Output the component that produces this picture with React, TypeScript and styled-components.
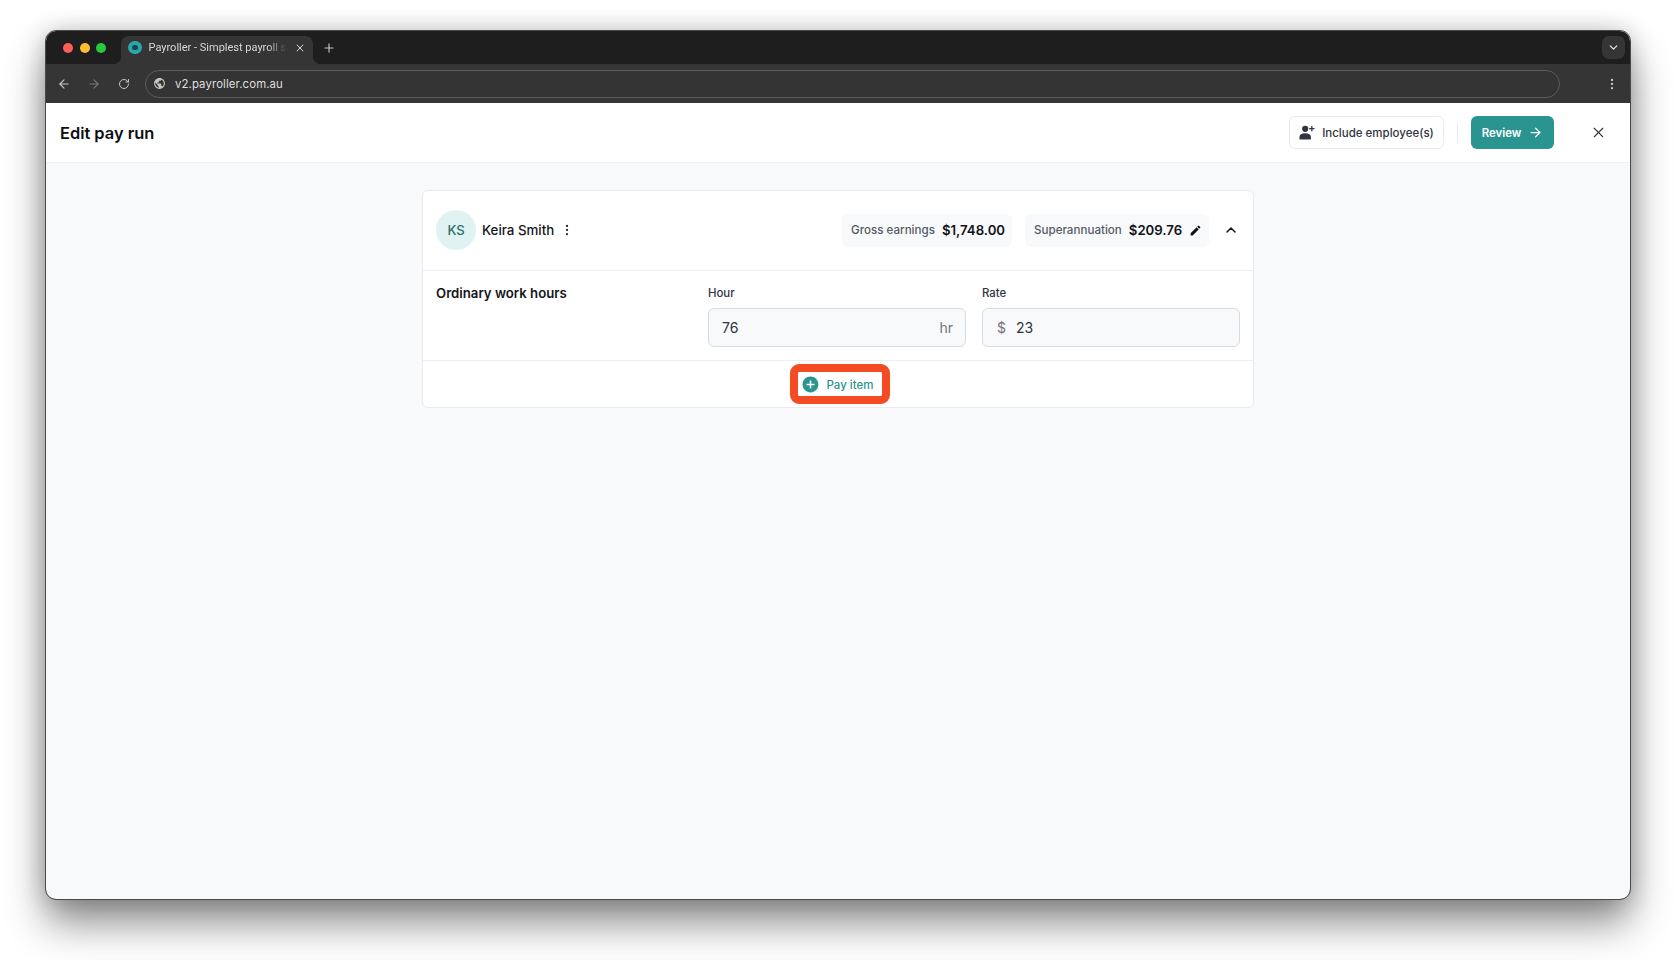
import React from "react";
import styled, { createGlobalStyle } from "styled-components";
import { ArrowLeft, ArrowRight, ChevronDown, ChevronUp, EllipsisVertical, Plus, RotateCw, X } from "lucide-react";
import { MdAddCircle, MdEdit, MdPublic } from "react-icons/md";

const teal = "#2a9490";

const GlobalStyle = createGlobalStyle`
  html, body {
    margin: 0;
    padding: 0;
    background: #fff;
  }
  * {
    box-sizing: border-box;
  }
  body {
    font-family: Inter, "Liberation Sans", sans-serif;
    color: #111318;
  }
`;

const Page = styled.div`
  width: 1676px;
  height: 960px;
  padding: 31px 46px 61px 46px;
  overflow: hidden;
`;

const BrowserWindow = styled.div`
  height: 100%;
  display: flex;
  flex-direction: column;
  border-radius: 10px;
  overflow: hidden;
  background: #f8f9fb;
  outline: 1px solid #4a4a4a;
  box-shadow: 0 24px 40px rgba(0, 0, 0, 0.45), 0 0 24px rgba(0, 0, 0, 0.22);
`;

const TitleBar = styled.div`
  height: 33px;
  flex: none;
  background: #1e1e1e;
  display: flex;
  align-items: flex-end;
  padding: 0 5px 0 17px;
`;

const Lights = styled.div`
  height: 28px;
  display: flex;
  align-items: center;
  gap: 6.5px;
  padding-bottom: 5px;
  margin-right: 15px;
`;

const Light = styled.span<{ $color: string }>`
  width: 10px;
  height: 10px;
  border-radius: 50%;
  background: ${(p) => p.$color};
`;

const Tab = styled.div`
  width: 192px;
  height: 28px;
  position: relative;
  background: #353535;
  border-radius: 8px 8px 0 0;
  display: flex;
  align-items: center;
  padding: 0 7px 5px 7px;
  color: #d8d8d8;
  font-family: Roboto, sans-serif;
  font-size: 11px;
  &::before,
  &::after {
    content: "";
    position: absolute;
    bottom: 0;
    width: 8px;
    height: 8px;
  }
  &::before {
    left: -8px;
    background: radial-gradient(circle at 0 0, transparent 8px, #353535 8.5px);
  }
  &::after {
    right: -8px;
    background: radial-gradient(circle at 100% 0, transparent 8px, #353535 8.5px);
  }
`;

const Favicon = styled.span`
  width: 13.5px;
  height: 13.5px;
  flex: none;
  border-radius: 50%;
  border: 4px solid #2aa6ac;
  background: #17464a;
  margin-right: 7px;
`;

const TabTitle = styled.span`
  flex: 1;
  min-width: 0;
  white-space: nowrap;
  -webkit-mask-image: linear-gradient(to right, #000 84%, transparent 98%);
  mask-image: linear-gradient(to right, #000 84%, transparent 98%);
`;

const TabClose = styled(X)`
  flex: none;
  margin-left: 4px;
  color: #d8d8d8;
`;

const NewTab = styled(Plus)`
  color: #c4c4c4;
  margin: 0 0 9px 9px;
`;

const TitleSpacer = styled.div`
  flex: 1;
`;

const TabSearch = styled.div`
  width: 23px;
  height: 23px;
  margin-bottom: 5px;
  border-radius: 7px;
  background: #353535;
  display: flex;
  align-items: center;
  justify-content: center;
  color: #e4e4e4;
`;

const Toolbar = styled.div`
  height: 39px;
  flex: none;
  background: #353535;
  display: flex;
  align-items: center;
  padding: 0 11px 0 3px;
`;

const NavButton = styled.div<{ $dim?: boolean }>`
  width: 30px;
  display: flex;
  justify-content: center;
  color: ${(p) => (p.$dim ? "#777" : "#c6c6c6")};
`;

const AddressBar = styled.div`
  width: 1415px;
  height: 28px;
  margin-left: 6px;
  border: 1px solid #5c5c5c;
  border-radius: 14px;
  display: flex;
  align-items: center;
  gap: 9.5px;
  padding-left: 6.5px;
  color: #dedede;
  font-size: 11.4px;
  letter-spacing: 0.1px;
  background: #343434;
`;

const Kebab = styled(EllipsisVertical)`
  margin-left: auto;
  color: #c6c6c6;
`;

const AppHeader = styled.header`
  height: 60px;
  flex: none;
  background: #fff;
  border-bottom: 1px solid #eef0f3;
  display: flex;
  align-items: center;
  padding: 0 23px 0 14px;
`;

const PageTitle = styled.h1`
  margin: 0;
  font-size: 16.4px;
  line-height: 20px;
  font-weight: 600;
  flex: 1;
  color: #0c0e12;
`;

const OutlineButton = styled.button`
  height: 33px;
  width: 155px;
  border: 1px solid #e8eaee;
  border-radius: 6px;
  background: #fff;
  display: flex;
  align-items: center;
  justify-content: center;
  gap: 7px;
  color: #30343e;
  font: 500 11.5px Inter, sans-serif;
`;

const HeaderDivider = styled.div`
  width: 1px;
  height: 20px;
  background: #e8eaee;
  margin: 0 13px;
`;

const PrimaryButton = styled.button`
  height: 33px;
  width: 83px;
  border: 0;
  border-radius: 6px;
  background: ${teal};
  color: #fff;
  display: flex;
  align-items: center;
  justify-content: center;
  gap: 7px;
  font: 600 11.4px Inter, sans-serif;
`;

const CloseButton = styled.div`
  margin-left: 36px;
  display: flex;
  color: #33363f;
`;

const Content = styled.main`
  flex: 1;
  padding: 27px 376px 0 376px;
`;

const Card = styled.section`
  background: #fff;
  border: 1px solid #e9ebef;
  border-radius: 6px;
`;

const CardHeader = styled.div`
  height: 80px;
  display: flex;
  align-items: center;
  padding: 0 14px 1px 13px;
  border-bottom: 1px solid #eceef1;
`;

const Avatar = styled.div`
  width: 40px;
  height: 40px;
  border-radius: 50%;
  background: #e0f3f2;
  color: #2f6f6c;
  font-size: 13px;
  font-weight: 500;
  display: flex;
  align-items: center;
  justify-content: center;
  margin-right: 6px;
`;

const Name = styled.span`
  font-size: 13.3px;
  font-weight: 500;
  color: #14161b;
`;

const NameMenu = styled(EllipsisVertical)`
  margin-left: 6px;
  color: #30343e;
`;

const StatGroup = styled.div`
  margin-left: auto;
  display: flex;
  gap: 13px;
  align-items: center;
`;

const Stat = styled.div<{ $width: number }>`
  width: ${(p) => p.$width}px;
  height: 33px;
  border-radius: 6px;
  background: #f8f9fb;
  display: flex;
  align-items: center;
  padding: 0 9px 0 9px;
  gap: 7px;
  white-space: nowrap;
`;

const StatLabel = styled.span`
  font-size: 11.6px;
  font-weight: 500;
  color: #555a66;
`;

const StatValue = styled.span`
  font-size: 13.2px;
  font-weight: 600;
  color: #111318;
`;

const EditIcon = styled(MdEdit)`
  flex: none;
  margin-left: auto;
  color: #111318;
`;

const Collapse = styled(ChevronUp)`
  margin-left: 14px;
  color: #111318;
`;

const WorkRow = styled.div`
  display: grid;
  grid-template-columns: 256px 258px 258px;
  column-gap: 16px;
  height: 90px;
  padding: 14px 13px 0;
  border-bottom: 1px solid #eceef1;
`;

const WorkTitle = styled.h3`
  margin: 0;
  font-size: 13.2px;
  line-height: 17px;
  font-weight: 600;
  color: #14161b;
`;

const Field = styled.label`
  display: flex;
  flex-direction: column;
  gap: 7px;
`;

const FieldLabel = styled.span`
  font-size: 11.4px;
  line-height: 16px;
  font-weight: 500;
  color: #30343e;
`;

const InputBox = styled.div`
  height: 39px;
  background: #f8f9fb;
  border: 1px solid #d8dbe2;
  border-radius: 6px;
  display: flex;
  align-items: center;
  padding: 0 13px;
  font-size: 14px;
  color: #30343e;
`;

const Value = styled.span`
  flex: 1;
`;

const Unit = styled.span`
  color: #6f7480;
  font-size: 14px;
  margin-right: -1px;
`;

const Prefix = styled(Unit)`
  margin: 0 10px 0 1px;
`;

const CardFooter = styled.div`
  height: 46px;
  display: flex;
  justify-content: center;
  align-items: center;
  padding-left: 4px;
`;

const PayItemButton = styled.button`
  width: 100px;
  height: 40px;
  background: #fff;
  border: 8px solid #f44c22;
  border-radius: 9px;
  display: flex;
  align-items: center;
  justify-content: center;
  gap: 6px;
  padding: 1px 5px 0 0;
  color: ${teal};
  font: 500 11.5px Inter, sans-serif;
`;

const UserPlus = () => (
  <svg width="16" height="15" viewBox="0 0 16 15" fill="currentColor">
    <circle cx="6.2" cy="3.8" r="3.1" />
    <path d="M0.5 14.5v-2.6c0-2.3 2.1-3.6 5.7-3.6s5.7 1.3 5.7 3.6v2.6z" />
    <path d="M12.2 1h1.3v2h2v1.3h-2v2h-1.3v-2h-2V3h2z" />
  </svg>
);

export default function App() {
  return (
    <>
      <GlobalStyle />
      <Page>
        <BrowserWindow>
          <TitleBar>
            <Lights>
              <Light $color="#ff5f57" />
              <Light $color="#febc2e" />
              <Light $color="#28c840" />
            </Lights>
            <Tab>
              <Favicon />
              <TabTitle>Payroller - Simplest payroll so</TabTitle>
              <TabClose size={12} strokeWidth={2} />
            </Tab>
            <NewTab size={14} strokeWidth={2} />
            <TitleSpacer />
            <TabSearch>
              <ChevronDown size={13} strokeWidth={2.5} />
            </TabSearch>
          </TitleBar>
          <Toolbar>
            <NavButton>
              <ArrowLeft size={14} />
            </NavButton>
            <NavButton $dim>
              <ArrowRight size={14} />
            </NavButton>
            <NavButton>
              <RotateCw size={12} />
            </NavButton>
            <AddressBar>
              <MdPublic size={13} color="#c6c6c6" />
              v2.payroller.com.au
            </AddressBar>
            <Kebab size={14} />
          </Toolbar>
          <AppHeader>
            <PageTitle>Edit pay run</PageTitle>
            <OutlineButton>
              <UserPlus />
              Include employee(s)
            </OutlineButton>
            <HeaderDivider />
            <PrimaryButton>
              Review
              <ArrowRight size={15} />
            </PrimaryButton>
            <CloseButton>
              <X size={17} strokeWidth={1.6} />
            </CloseButton>
          </AppHeader>
          <Content>
            <Card>
              <CardHeader>
                <Avatar>KS</Avatar>
                <Name>Keira Smith</Name>
                <NameMenu size={14} />
                <StatGroup>
                  <Stat $width={170}>
                    <StatLabel>Gross earnings</StatLabel>
                    <StatValue>$1,748.00</StatValue>
                  </Stat>
                  <Stat $width={184}>
                    <StatLabel>Superannuation</StatLabel>
                    <StatValue>$209.76</StatValue>
                    <EditIcon size={13} />
                  </Stat>
                </StatGroup>
                <Collapse size={16} strokeWidth={2.2} />
              </CardHeader>
              <WorkRow>
                <WorkTitle>Ordinary work hours</WorkTitle>
                <Field>
                  <FieldLabel>Hour</FieldLabel>
                  <InputBox>
                    <Value>76</Value>
                    <Unit>hr</Unit>
                  </InputBox>
                </Field>
                <Field>
                  <FieldLabel>Rate</FieldLabel>
                  <InputBox>
                    <Prefix>$</Prefix>
                    <Value>23</Value>
                  </InputBox>
                </Field>
              </WorkRow>
              <CardFooter>
                <PayItemButton>
                  <MdAddCircle size={19} />
                  Pay item
                </PayItemButton>
              </CardFooter>
            </Card>
          </Content>
        </BrowserWindow>
      </Page>
    </>
  );
}
